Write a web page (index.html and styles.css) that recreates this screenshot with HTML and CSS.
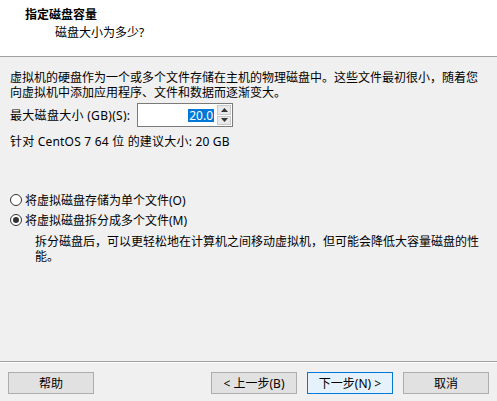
FILE: index.html
```html
<!DOCTYPE html>
<html lang="zh-CN">
<head>
  <meta charset="UTF-8">
  <title>指定磁盘容量</title>
  <link rel="stylesheet" href="styles.css">
</head>
<body>
  <div class="wizard">
    <header class="head">
      <h1>指定磁盘容量</h1>
      <p>磁盘大小为多少?</p>
    </header>

    <main class="content">
      <p class="intro">虚拟机的硬盘作为一个或多个文件存储在主机的物理磁盘中。这些文件最初很小，随着您向虚拟机中添加应用程序、文件和数据而逐渐变大。</p>

      <div class="size-row">
        <label>最大磁盘大小 (GB)(S):</label>
        <div class="spin">
          <div class="spin-field"><span class="sel">20.0</span></div>
          <div class="spin-btns">
            <span class="spin-up"><svg width="7" height="4" viewBox="0 0 7 4"><path d="M3.5 0 L7 4 L0 4 Z" fill="#333"/></svg></span>
            <span class="spin-down"><svg width="7" height="4" viewBox="0 0 7 4"><path d="M0 0 L7 0 L3.5 4 Z" fill="#333"/></svg></span>
          </div>
        </div>
      </div>

      <p class="hint">针对 CentOS 7 64 位 的建议大小: 20 GB</p>

      <!-- 磁盘文件方式 -->
      <div class="radio first">
        <span class="dot"></span>
        <span>将虚拟磁盘存储为单个文件(O)</span>
      </div>
      <div class="radio checked">
        <span class="dot"></span>
        <span>将虚拟磁盘拆分成多个文件(M)</span>
      </div>
      <p class="desc">拆分磁盘后，可以更轻松地在计算机之间移动虚拟机，但可能会降低大容量磁盘的性能。</p>
    </main>

    <footer class="foot">
      <button class="help">帮助</button>
      <button>&lt; 上一步(B)</button>
      <button class="primary">下一步(N) &gt;</button>
      <button>取消</button>
    </footer>
  </div>
</body>
</html>
```

FILE: styles.css
```css
* {
  box-sizing: border-box;
  margin: 0;
  padding: 0;
}
body {
  background-color: #f0f0f0;
  color: #000;
  font-family: "Noto Sans", "Noto Sans CJK SC", sans-serif;
  font-size: 12px;
  line-height: 15px;
}
.wizard {
  display: flex;
  flex-direction: column;
  width: 497px;
  height: 401px;
}
.head {
  height: 57px;
  background-color: #fff;
  border-bottom: 1px solid #a0a0a0;
  padding-top: 7px;
}
.head h1 {
  font-size: 12px;
  font-weight: bold;
  padding-left: 25px;
}
.head p {
  margin-top: 3px;
  padding-left: 55px;
}
.content {
  flex: 1;
  padding: 13px 10px 0 10px;
}
.intro {
  width: 477px;
}
.size-row {
  display: flex;
  align-items: center;
  gap: 4px;
  margin-top: 3px;
  height: 24px;
}
.size-row label {
  width: 123px;
  letter-spacing: 0.3px;
}
.spin {
  display: flex;
  width: 96px;
  height: 24px;
  border: 1px solid #7a7a7a;
  background-color: #fff;
}
.spin-field {
  flex: 1;
  display: flex;
  align-items: center;
  justify-content: flex-end;
  padding-right: 2px;
}
.sel {
  background-color: #0078d7;
  color: #fff;
  line-height: 13px;
  padding: 0 1px;
}
.spin-btns {
  display: flex;
  flex-direction: column;
  width: 16px;
  padding: 1px;
  gap: 1px;
}
.spin-btns span {
  flex: 1;
  display: flex;
  align-items: center;
  justify-content: center;
  background-color: #e9e9e9;
  border: 1px solid #c9c9c9;
}
.hint {
  margin-top: 7px;
  letter-spacing: 0.2px;
}
.radio {
  display: flex;
  align-items: center;
  gap: 3px;
  height: 16px;
}
.radio.first {
  margin-top: 43px;
}
.radio.checked {
  margin-top: 4px;
}
.dot {
  position: relative;
  width: 12px;
  height: 12px;
  border: 1px solid #333;
  border-radius: 50%;
  background-color: #fff;
}
.radio.checked .dot::after {
  content: "";
  position: absolute;
  left: 2px;
  top: 2px;
  width: 6px;
  height: 6px;
  border-radius: 50%;
  background-color: #333;
}
.desc {
  margin: 6px 0 0 25px;
  width: 452px;
}
.foot {
  display: flex;
  gap: 10px;
  height: 40px;
  padding: 10px 8px 0 8px;
  border-top: 1px solid #a0a0a0;
  box-shadow: inset 0 1px #fff;
}
button {
  width: 86px;
  height: 22px;
  background-color: #e1e1e1;
  border: 1px solid #adadad;
  font-family: inherit;
  font-size: 12px;
  color: #000;
}
button.help {
  margin-right: auto;
}
button.primary {
  background-color: #e5f1fb;
  border-color: #0078d7;
}
```
